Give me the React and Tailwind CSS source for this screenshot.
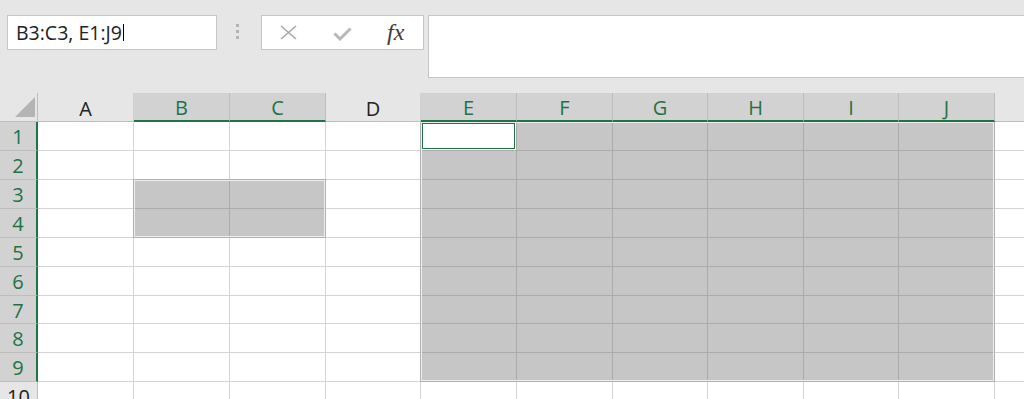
import React from "react"

const COLS = ["A", "B", "C", "D", "E", "F", "G", "H", "I", "J"]
const SEL_COLS = ["B", "C", "E", "F", "G", "H", "I", "J"]
const ROWS = [1, 2, 3, 4, 5, 6, 7, 8, 9, 10]

// which cells are part of the two selected ranges
const inSelection = (col, row) => {
  if ((col === "B" || col === "C") && (row === 3 || row === 4)) return true
  if ("EFGHIJ".includes(col) && row <= 9) return true
  return false
}

function Cell({ col, row }) {
  const active = col === "E" && row === 1
  const sel = inSelection(col, row)
  if (active) {
    return (
      <div className="relative bg-white border-r border-b border-[#ababab]">
        <div className="absolute inset-px border border-[#217346]" />
      </div>
    )
  }
  return (
    <div
      className={
        sel
          ? "bg-[#c6c6c6] border-r border-b border-[#ababab]"
          : "bg-white border-r border-b border-[#d4d4d4]"
      }
    />
  )
}

function ColHeader({ col }) {
  const sel = SEL_COLS.includes(col)
  return (
    <div
      className={
        sel
          ? "flex items-center justify-center pt-[3px] bg-[#d2d2d2] border-r border-r-[#bdbdbd] border-b-2 border-b-[#217346] text-[#217346]"
          : "flex items-center justify-center pt-[3px] bg-[#e6e6e6] border-r border-r-[#cfcfcf] border-b border-b-[#bdbdbd] text-[#222]"
      }
    >
      {col}
    </div>
  )
}

function RowHeader({ row }) {
  const sel = row <= 9
  return (
    <div
      className={
        sel
          ? "flex items-center justify-center pt-[2px] bg-[#d2d2d2] border-r-2 border-r-[#217346] border-b border-b-[#bdbdbd] text-[#217346]"
          : "flex items-center justify-center pt-[2px] bg-[#e6e6e6] border-r border-r-[#bdbdbd] border-b border-b-[#cfcfcf] text-[#222]"
      }
    >
      {row}
    </div>
  )
}

export default function App() {
  return (
    <div
      className="w-[1024px] h-[399px] overflow-hidden bg-[#e6e6e6] text-[20px]"
      style={{ fontFamily: "'Open Sans', 'Noto Sans', sans-serif" }}
    >
      {/* formula bar */}
      <div className="h-[93px] flex items-start">
        <div className="ml-[7px] mt-[15px] w-[210px] h-[35px] bg-white border border-[#c6c6c6] flex items-center pl-2 text-[19.5px] text-[#222]">
          <span>B3:C3, E1:J9</span>
          <span className="inline-block w-px h-[17px] bg-black ml-px" />
        </div>

        <div className="ml-[19px] mt-[24px] flex flex-col gap-[3px]">
          <div className="w-[3px] h-[3px] bg-[#b4b4b4]" />
          <div className="w-[3px] h-[3px] bg-[#b4b4b4]" />
          <div className="w-[3px] h-[3px] bg-[#b4b4b4]" />
        </div>

        <div className="ml-[22px] mt-[15px] w-[163px] h-[35px] bg-white border border-[#c6c6c6] flex items-center pl-[18px]">
          <svg width="17" height="15" viewBox="0 0 17 15">
            <path d="M1 1 L16 14 M16 1 L1 14" stroke="#a8a8a8" strokeWidth="1.6" fill="none" />
          </svg>
          <svg width="19" height="14" viewBox="0 0 19 14" className="ml-[36px] mt-[3px]">
            <path d="M1.5 6.5 L7 12 L17.5 1.5" stroke="#b8b8b8" strokeWidth="3" fill="none" />
          </svg>
          <span
            className="ml-[35px] italic text-[24px] text-[#3c3c3c] leading-none -mt-[2px]"
            style={{ fontFamily: "'Liberation Serif', 'DejaVu Serif', serif" }}
          >
            fx
          </span>
        </div>

        <div className="ml-[4px] mt-[15px] flex-1 h-[63px] bg-white border border-r-0 border-[#c6c6c6]" />
      </div>

      {/* sheet grid */}
      <div className="relative grid grid-cols-[38px_96px_96px_96px_95px_96px_96px_95px_96px_95px_96px_1fr] grid-rows-[29px_29px_29px_29px_29px_29px_29px_28px_29px_29px_29px] bg-white">
        <div className="relative bg-[#e6e6e6] border-r border-b border-[#bdbdbd]">
          <svg width="38" height="29" viewBox="0 0 38 29" className="absolute left-0 top-0">
            <path d="M35 4 L35 24 L15 24 Z" fill="#b4b4b4" />
          </svg>
        </div>
        {COLS.map((c) => (
          <ColHeader key={c} col={c} />
        ))}
        <div className="bg-[#e6e6e6] border-b border-[#bdbdbd]" />

        {ROWS.map((r) => (
          <React.Fragment key={r}>
            <RowHeader row={r} />
            {COLS.map((c) => (
              <Cell key={c} col={c} row={r} />
            ))}
            <div className="bg-white border-b border-[#d4d4d4]" />
          </React.Fragment>
        ))}

        {/* selection outlines */}
        <div className="pointer-events-none absolute left-[133px] top-[86px] w-[193px] h-[59px] border border-[#b0b0b0] shadow-[inset_0_0_0_1px_#eeeeee]" />
        <div className="pointer-events-none absolute left-[420px] top-[29px] w-[575px] h-[260px] border-l border-r border-b border-[#b0b0b0] shadow-[inset_0_0_0_1px_#eeeeee]" />
      </div>
    </div>
  )
}
